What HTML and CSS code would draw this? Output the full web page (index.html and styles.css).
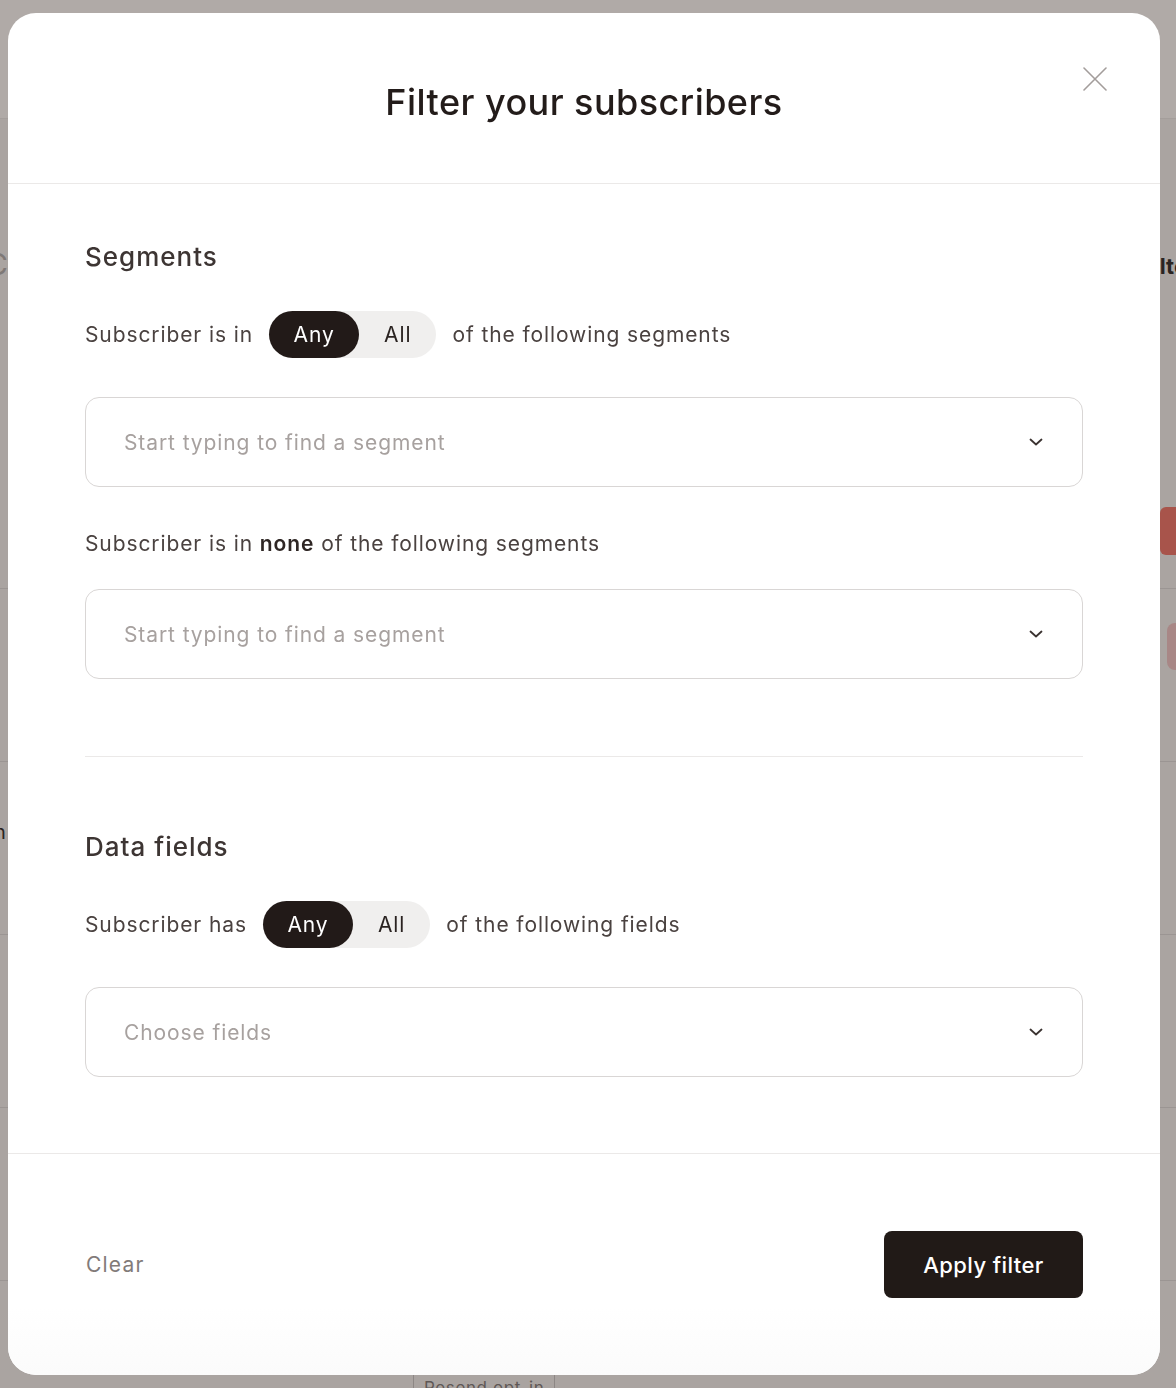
FILE: index.html
```html
<!DOCTYPE html>
<html>
<head>
    <title>Filter your subscribers</title>
    <link rel="stylesheet" href="styles.css">
</head>
<body>
    <!-- page behind the dialog, dimmed -->
    <div class="backdrop">
        <div class="bg-header"></div>
        <div class="bg-toolbar">
            <span class="bg-icon">C</span>
            <span class="bg-filter">Filter</span>
        </div>
        <div class="bg-intro">
            <span></span>
            <span class="bg-red"></span>
        </div>
        <div class="bg-row">
            <span></span>
            <span class="bg-pink"></span>
        </div>
        <div class="bg-row">
            <span class="bg-text">n</span>
        </div>
        <div class="bg-row"></div>
        <div class="bg-row"></div>
        <div class="bg-row bg-last">
            <span class="bg-resend">Resend opt-in</span>
        </div>
    </div>

    <div class="modal">
        <div class="modal-header">
            <h1>Filter your subscribers</h1>
            <button class="close-btn" type="button" aria-label="Close">
                <svg width="24" height="24" viewBox="0 0 24 24" fill="none" stroke="currentColor" stroke-width="1.6" stroke-linecap="round">
                    <path d="M1 1L23 23M23 1L1 23"/>
                </svg>
            </button>
        </div>

        <div class="modal-body">
            <section class="section section-first">
                <h2>Segments</h2>
                <div class="match-row">
                    <span>Subscriber is in</span>
                    <div class="toggle">
                        <span class="toggle-opt active">Any</span>
                        <span class="toggle-opt">All</span>
                    </div>
                    <span>of the following segments</span>
                </div>
                <div class="select">
                    <span class="placeholder">Start typing to find a segment</span>
                    <svg class="chevron" width="14" height="8" viewBox="0 0 14 8" fill="none" stroke="currentColor" stroke-width="1.8" stroke-linecap="round" stroke-linejoin="round">
                        <path d="M1.5 1.5L7 6.5L12.5 1.5"/>
                    </svg>
                </div>
                <p class="label">Subscriber is in <strong>none</strong> of the following segments</p>
                <div class="select select-tight">
                    <span class="placeholder">Start typing to find a segment</span>
                    <svg class="chevron" width="14" height="8" viewBox="0 0 14 8" fill="none" stroke="currentColor" stroke-width="1.8" stroke-linecap="round" stroke-linejoin="round">
                        <path d="M1.5 1.5L7 6.5L12.5 1.5"/>
                    </svg>
                </div>
            </section>

            <section class="section section-second">
                <h2>Data fields</h2>
                <div class="match-row">
                    <span>Subscriber has</span>
                    <div class="toggle">
                        <span class="toggle-opt active">Any</span>
                        <span class="toggle-opt">All</span>
                    </div>
                    <span>of the following fields</span>
                </div>
                <div class="select">
                    <span class="placeholder">Choose fields</span>
                    <svg class="chevron" width="14" height="8" viewBox="0 0 14 8" fill="none" stroke="currentColor" stroke-width="1.8" stroke-linecap="round" stroke-linejoin="round">
                        <path d="M1.5 1.5L7 6.5L12.5 1.5"/>
                    </svg>
                </div>
            </section>
        </div>

        <div class="modal-footer">
            <button class="clear-btn" type="button">Clear</button>
            <button class="apply-btn" type="button">Apply filter</button>
        </div>
    </div>
</body>
</html>
```

FILE: styles.css
```css
html, body {
    margin: 0;
    height: 100%;
    overflow: hidden;
}

body {
    font-family: Inter, "Noto Sans", sans-serif;
    background-color: #aaa4a1;
    color: #4a4240;
}

/* dimmed page underneath */
.backdrop {
    display: flex;
    flex-direction: column;
}

.bg-header {
    height: 118px;
    background-color: #b0aaa7;
    border-bottom: 1px solid #a49e9b;
}

.bg-toolbar {
    height: 160px;
    display: flex;
    justify-content: space-between;
    align-items: flex-start;
    padding-top: 130px;
    box-sizing: border-box;
}

.bg-icon {
    margin-left: -14px;
    color: #7f7977;
    font-size: 30px;
    line-height: 30px;
}

.bg-filter {
    margin-top: 4px;
    margin-right: -20px;
    color: #2a2422;
    font-weight: 700;
    font-size: 22px;
    line-height: 26px;
}

.bg-intro {
    height: 309px;
    display: flex;
    justify-content: space-between;
    align-items: flex-start;
    border-bottom: 1px solid #9b9593;
}

.bg-red {
    margin-top: 228px;
    width: 30px;
    height: 48px;
    margin-right: -14px;
    background-color: #a8544b;
    border-radius: 6px;
}

.bg-row {
    height: 172px;
    display: flex;
    justify-content: space-between;
    align-items: flex-start;
    border-bottom: 1px solid #9b9593;
}

.bg-pink {
    margin-top: 34px;
    width: 30px;
    height: 47px;
    margin-right: -21px;
    background-color: #a88786;
    border-radius: 8px;
}

.bg-text {
    margin-top: 58px;
    margin-left: -6px;
    color: #2a2422;
    font-size: 20px;
}

.bg-last {
    border-bottom: none;
    padding-left: 413px;
}

.bg-resend {
    margin-top: 93px;
    padding: 4px 10px;
    border-left: 1px solid #8d8785;
    border-right: 1px solid #8d8785;
    color: #5f5856;
    font-size: 17px;
    letter-spacing: 0.6px;
}

/* dialog */
.modal {
    position: fixed;
    top: 13px;
    left: 8px;
    width: 1152px;
    height: 1362px;
    background-color: #fff;
    border-radius: 28px;
    display: flex;
    flex-direction: column;
    overflow: hidden;
}

.modal-header {
    position: relative;
    height: 170px;
    border-bottom: 1px solid #ebe9e8;
    display: flex;
    align-items: center;
    justify-content: center;
}

.modal-header h1 {
    margin: 8px 0 0;
    font-size: 36px;
    font-weight: 500;
    letter-spacing: 0.45px;
    color: #231c1a;
}

.close-btn {
    position: absolute;
    top: 54px;
    right: 53px;
    padding: 0;
    border: none;
    background: none;
    color: #a39d9b;
    cursor: pointer;
}

.close-btn svg {
    display: block;
}

.modal-body {
    flex: 1;
    padding: 0 77px;
}

.section h2 {
    margin: 0;
    font-size: 26px;
    line-height: 32px;
    font-weight: 500;
    letter-spacing: 1px;
    color: #3d3533;
}

.section-first {
    padding: 57px 0 77px;
    border-bottom: 1px solid #ebe9e8;
}

.section-second {
    padding-top: 74px;
}

.match-row {
    display: flex;
    align-items: center;
    gap: 16px;
    margin-top: 38px;
    font-size: 21px;
    letter-spacing: 0.9px;
}

.toggle {
    display: flex;
    background-color: #f0efee;
    border-radius: 24px;
    height: 47px;
}

.toggle-opt {
    display: flex;
    align-items: center;
    justify-content: center;
    padding: 0 25px;
    border-radius: 24px;
    color: #2a2321;
}

.toggle-opt.active {
    width: 90px;
    padding: 0;
    background-color: #221a18;
    color: #fff;
}

.select {
    margin-top: 39px;
    height: 90px;
    box-sizing: border-box;
    border: 1px solid #d9d6d5;
    border-radius: 14px;
    display: flex;
    align-items: center;
    justify-content: space-between;
    padding: 0 39px 0 38px;
}

.select-tight {
    margin-top: 31px;
}

.placeholder {
    font-size: 21px;
    letter-spacing: 0.9px;
    color: #a7a19f;
}

.chevron {
    color: #3a3230;
}

.label {
    margin: 43px 0 0;
    font-size: 21px;
    line-height: 28px;
    letter-spacing: 0.9px;
}

.label strong {
    font-weight: 600;
    color: #2e2624;
}

.modal-footer {
    height: 221px;
    border-top: 1px solid #ebe9e8;
    display: flex;
    align-items: center;
    justify-content: space-between;
    padding: 0 77px 0 78px;
    background: linear-gradient(#fff 70%, #fbfbfb);
}

.clear-btn {
    padding: 0;
    border: none;
    background: none;
    font-family: inherit;
    font-size: 21px;
    letter-spacing: 1.2px;
    color: #827b79;
    cursor: pointer;
}

.apply-btn {
    width: 199px;
    height: 67px;
    border: none;
    border-radius: 8px;
    background-color: #211a17;
    color: #fff;
    font-family: inherit;
    font-size: 22px;
    font-weight: 500;
    letter-spacing: 0.4px;
    cursor: pointer;
}
```
